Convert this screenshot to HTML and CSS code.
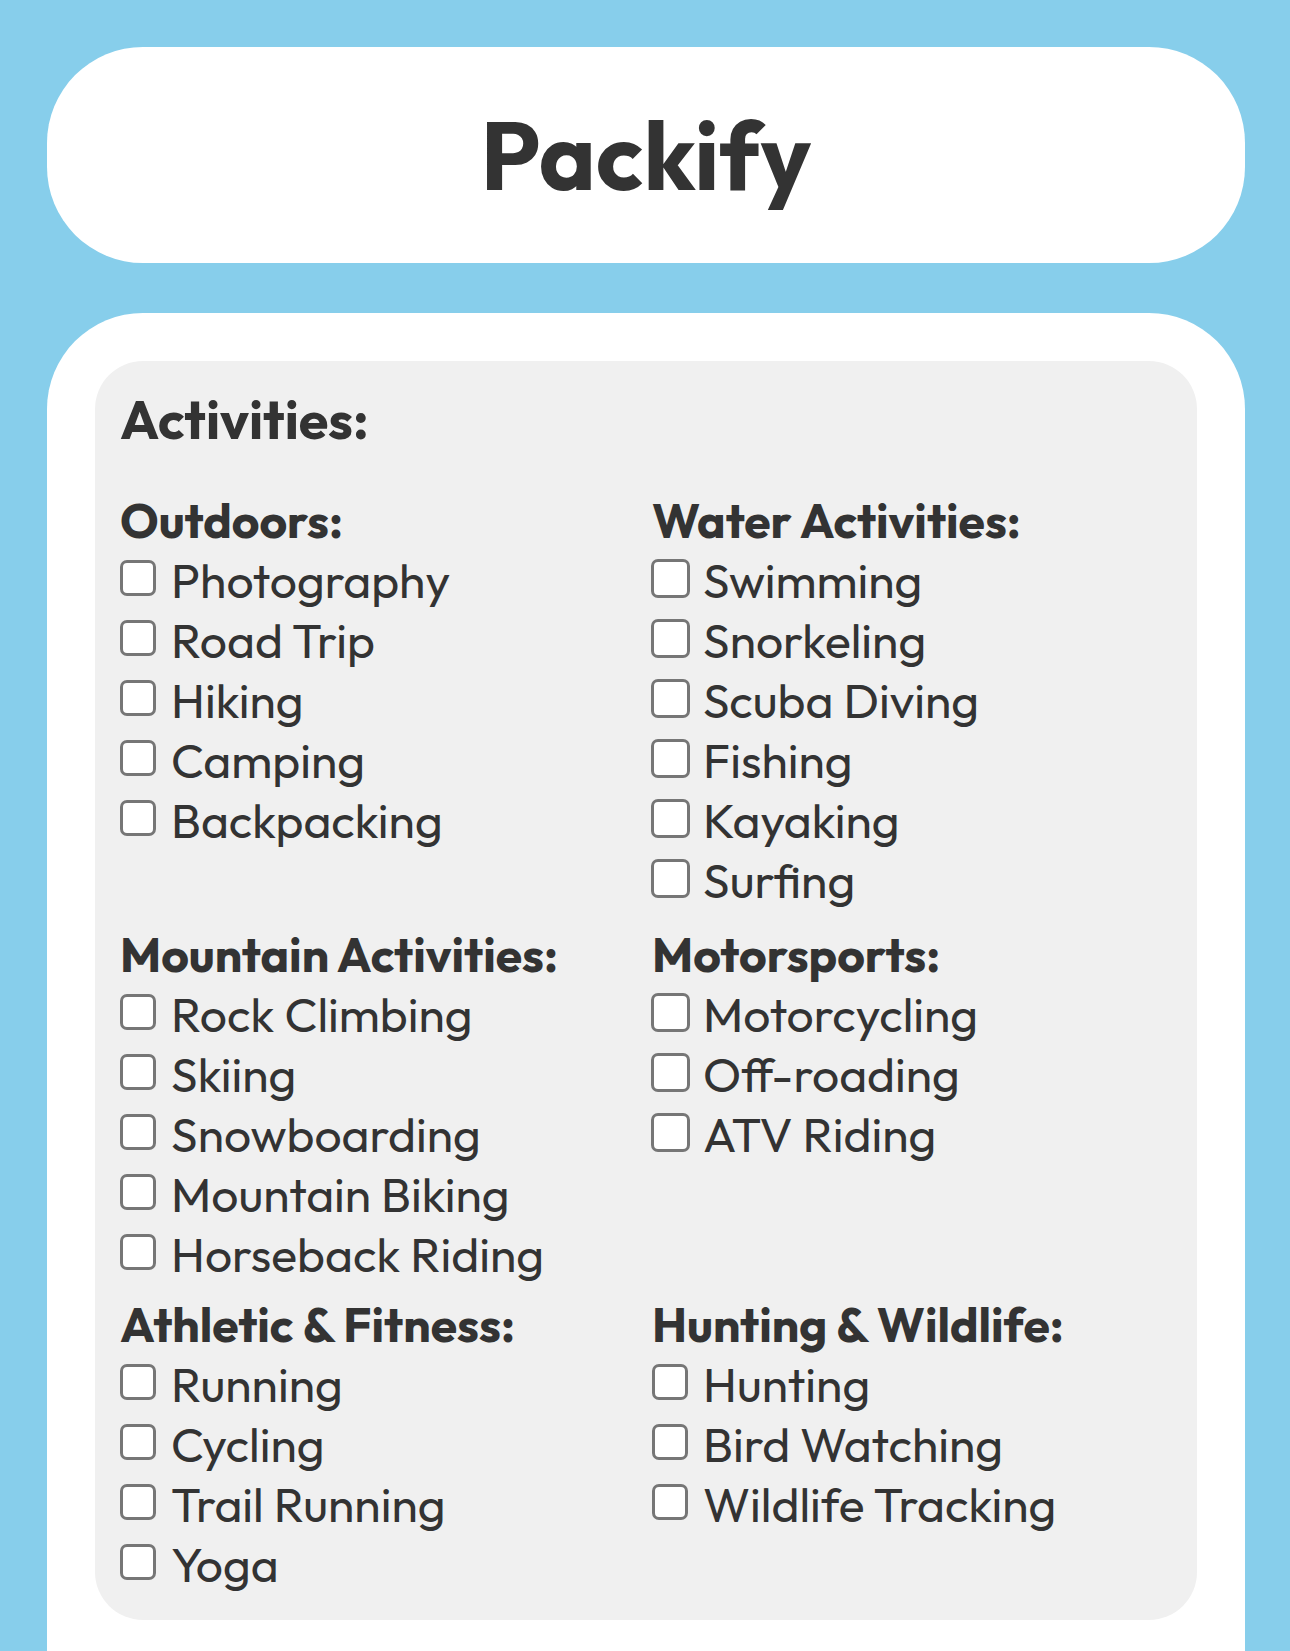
FILE: index.html
```html
<!DOCTYPE html>
<html lang="en">
<head>
<meta charset="utf-8">
<meta name="viewport" content="width=device-width, initial-scale=1">
<title>Packify</title>
<link rel="stylesheet" href="styles.css">
</head>
<body>
<header class="banner">
  <h1 class="brand">Packify</h1>
</header>
<main class="sheet">
  <section class="panel">
    <h2 class="panel-title">Activities:</h2>
    <div class="groups">
      <section class="group">
        <h3 class="group-title">Outdoors:</h3>
        <label class="option"><input class="box" type="checkbox"><span>Photography</span></label>
        <label class="option"><input class="box" type="checkbox"><span>Road Trip</span></label>
        <label class="option"><input class="box" type="checkbox"><span>Hiking</span></label>
        <label class="option"><input class="box" type="checkbox"><span>Camping</span></label>
        <label class="option"><input class="box" type="checkbox"><span>Backpacking</span></label>
      </section>
      <section class="group group-large">
        <h3 class="group-title">Water Activities:</h3>
        <label class="option"><input class="box" type="checkbox"><span>Swimming</span></label>
        <label class="option"><input class="box" type="checkbox"><span>Snorkeling</span></label>
        <label class="option"><input class="box" type="checkbox"><span>Scuba Diving</span></label>
        <label class="option"><input class="box" type="checkbox"><span>Fishing</span></label>
        <label class="option"><input class="box" type="checkbox"><span>Kayaking</span></label>
        <label class="option"><input class="box" type="checkbox"><span>Surfing</span></label>
      </section>
      <section class="group">
        <h3 class="group-title">Mountain Activities:</h3>
        <label class="option"><input class="box" type="checkbox"><span>Rock Climbing</span></label>
        <label class="option"><input class="box" type="checkbox"><span>Skiing</span></label>
        <label class="option"><input class="box" type="checkbox"><span>Snowboarding</span></label>
        <label class="option"><input class="box" type="checkbox"><span>Mountain Biking</span></label>
        <label class="option"><input class="box" type="checkbox"><span>Horseback Riding</span></label>
      </section>
      <section class="group group-large">
        <h3 class="group-title">Motorsports:</h3>
        <label class="option"><input class="box" type="checkbox"><span>Motorcycling</span></label>
        <label class="option"><input class="box" type="checkbox"><span>Off-roading</span></label>
        <label class="option"><input class="box" type="checkbox"><span>ATV Riding</span></label>
      </section>
      <section class="group">
        <h3 class="group-title">Athletic &amp; Fitness:</h3>
        <label class="option"><input class="box" type="checkbox"><span>Running</span></label>
        <label class="option"><input class="box" type="checkbox"><span>Cycling</span></label>
        <label class="option"><input class="box" type="checkbox"><span>Trail Running</span></label>
        <label class="option"><input class="box" type="checkbox"><span>Yoga</span></label>
      </section>
      <section class="group">
        <h3 class="group-title">Hunting &amp; Wildlife:</h3>
        <label class="option"><input class="box" type="checkbox"><span>Hunting</span></label>
        <label class="option"><input class="box" type="checkbox"><span>Bird Watching</span></label>
        <label class="option"><input class="box" type="checkbox"><span>Wildlife Tracking</span></label>
      </section>
    </div>
  </section>
</main>
</body>
</html>
```
FILE: styles.css
```css
* {
  box-sizing: border-box;
}

body {
  display: flex;
  flex-direction: column;
  min-height: 100vh;
  margin: 0;
  padding: 47px 45px 0 47px;
  background: #87ceeb;
  color: #333;
  font-family: Outfit, Lato, sans-serif;
}

h1,
h2,
h3 {
  margin: 0;
  font-weight: 700;
}

.banner {
  padding: 48px;
  border-radius: 96px;
  background: #fff;
  text-align: center;
}

.brand {
  font-size: 96px;
  line-height: 120px;
}

.sheet {
  flex: 1;
  margin-top: 50px;
  padding: 48px 48px 24px;
  border-radius: 96px 96px 0 0;
  background: #fff;
}

.panel {
  padding: 24px 25px 26px;
  border-radius: 48px;
  background: #f0f0f0;
}

.panel-title {
  margin-bottom: 37px;
  font-size: 54px;
  line-height: 68px;
}

.groups {
  display: grid;
  grid-template-columns: 1fr 1fr;
  gap: 10px 12px;
}

.group-title {
  font-size: 48px;
  line-height: 60px;
}

.group-large {
  padding-bottom: 4px;
}

.option {
  display: grid;
  grid-template-columns: 36px 1fr;
  column-gap: 15px;
  align-items: center;
  font-size: 48px;
  line-height: 60px;
}

.box {
  appearance: none;
  width: 36px;
  height: 36px;
  margin: 0 0 4px;
  border: 3px solid #767676;
  border-radius: 7px;
  background: #fff;
  justify-self: center;
}

.group-large .box {
  width: 39px;
  height: 39px;
}

.box:checked {
  background: #767676;
}
```
